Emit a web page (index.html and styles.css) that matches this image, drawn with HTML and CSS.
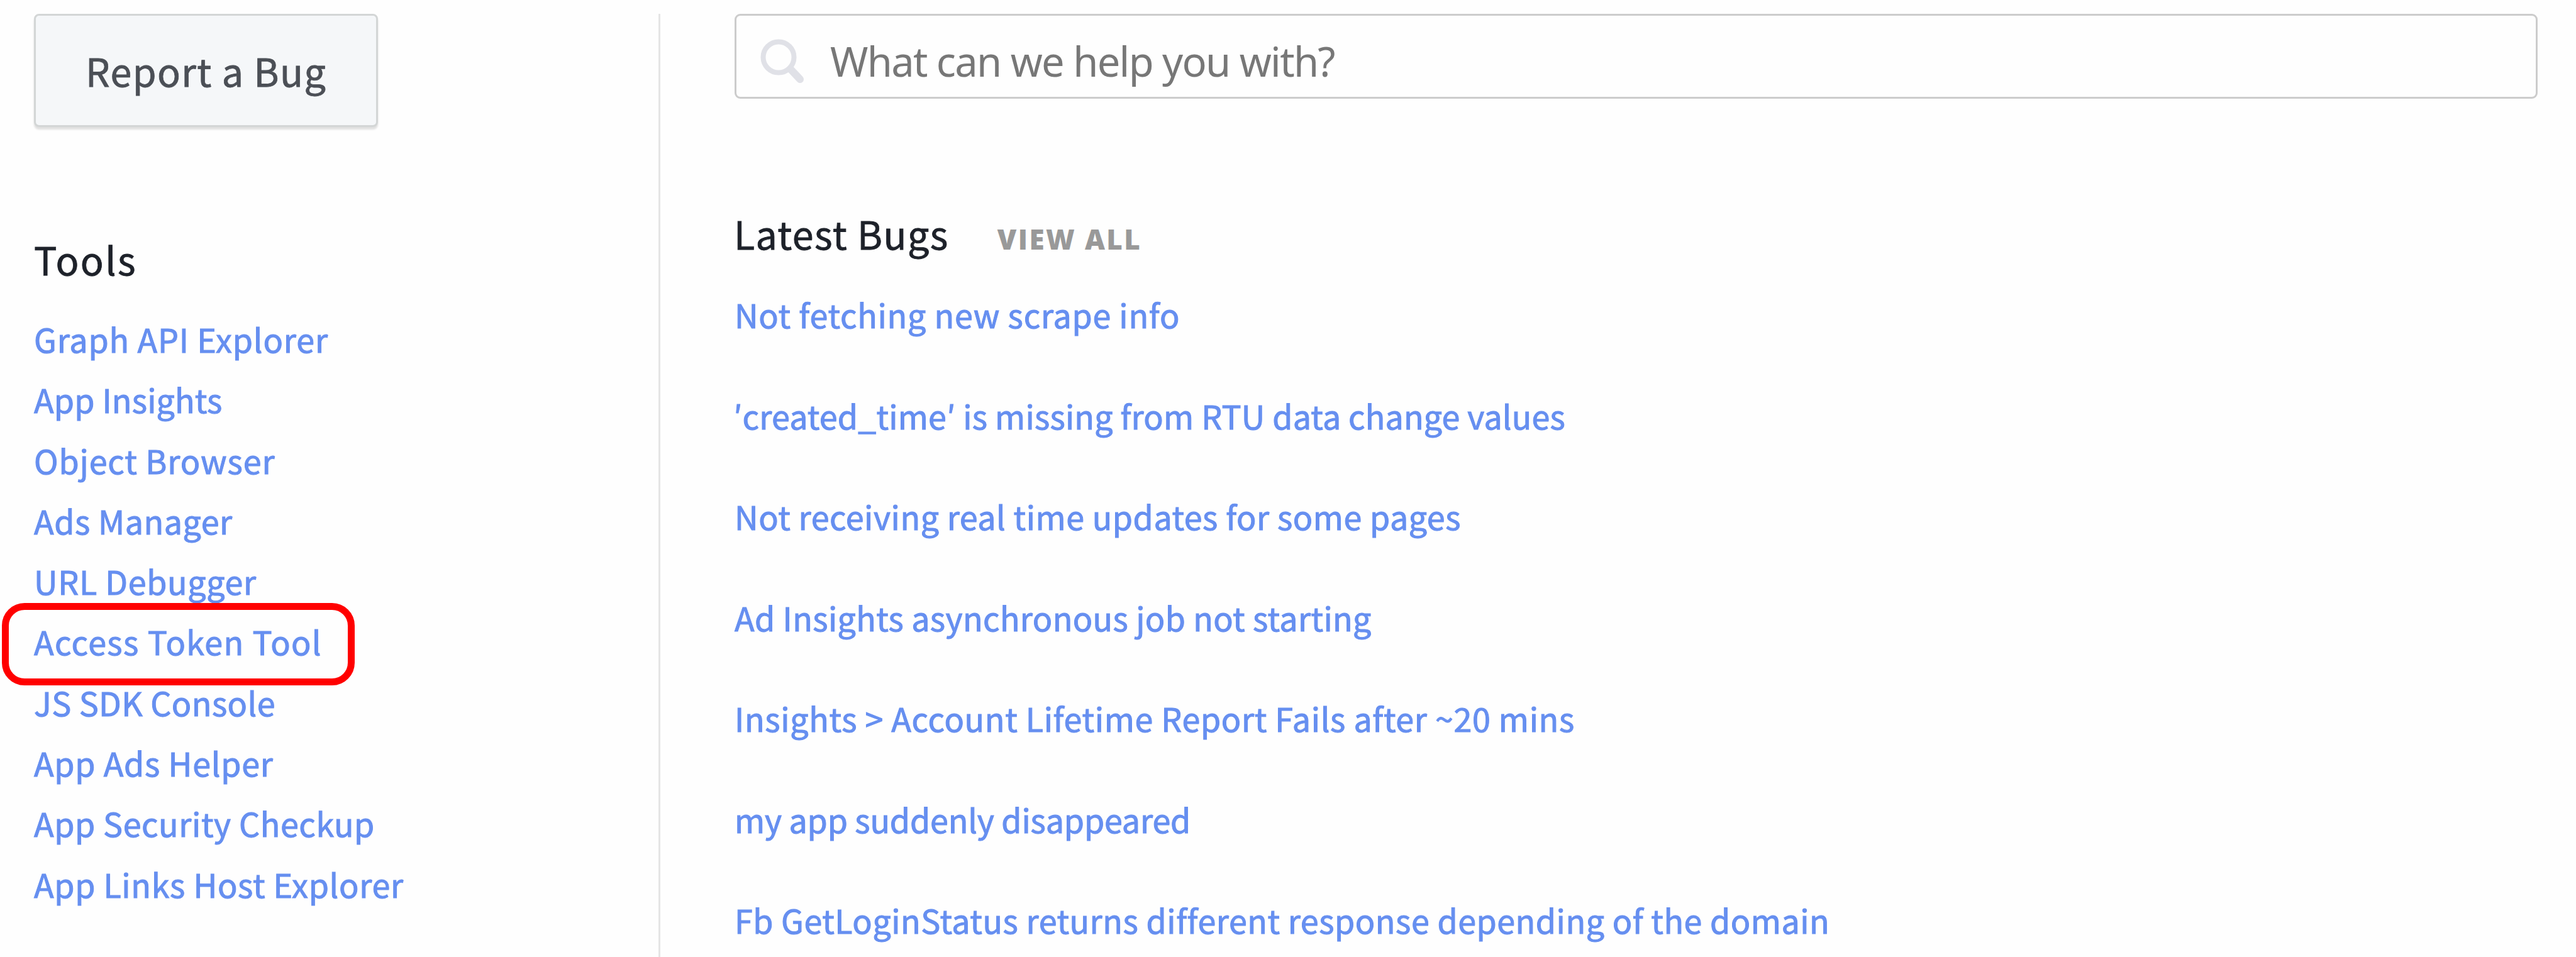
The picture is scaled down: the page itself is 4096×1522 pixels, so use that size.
FILE: index.html
```html
<!DOCTYPE html>
<html lang="en">
<head>
<meta charset="utf-8">
<title>Bugs</title>
<link rel="stylesheet" href="styles.css">
</head>
<body>
<div class="page">
  <aside class="sidebar">
    <button class="report" type="button">Report a Bug</button>
    <h2 class="tools-title">Tools</h2>
    <ul class="tools">
      <li><a>Graph API Explorer</a></li>
      <li><a>App Insights</a></li>
      <li><a>Object Browser</a></li>
      <li><a>Ads Manager</a></li>
      <li><a>URL Debugger</a></li>
      <li class="marked"><a>Access Token Tool</a></li>
      <li><a>JS SDK Console</a></li>
      <li><a>App Ads Helper</a></li>
      <li><a>App Security Checkup</a></li>
      <li><a>App Links Host Explorer</a></li>
    </ul>
  </aside>
  <main class="main">
    <div class="search">
      <svg class="search-icon" viewBox="0 0 76 76" width="76" height="76">
        <circle cx="32" cy="32" r="24.5" fill="none" stroke="#e0e1e7" stroke-width="8"/>
        <path d="M51 51 L66 67" fill="none" stroke="#e0e1e7" stroke-width="12" stroke-linecap="round"/>
      </svg>
      <span class="search-hint">What can we help you with?</span>
    </div>
    <div class="bugs-head">
      <h2 class="bugs-title">Latest Bugs</h2>
      <a class="view-all">VIEW ALL</a>
    </div>
    <ul class="bugs">
      <li><a>Not fetching new scrape info</a></li>
      <li><a>′created_time′ is missing from RTU data change values</a></li>
      <li><a>Not receiving real time updates for some pages</a></li>
      <li><a>Ad Insights asynchronous job not starting</a></li>
      <li><a>Insights &gt; Account Lifetime Report Fails after ~20 mins</a></li>
      <li><a>my app suddenly disappeared</a></li>
      <li><a>Fb GetLoginStatus returns different response depending of the domain</a></li>
    </ul>
  </main>
</div>
</body>
</html>
```
FILE: styles.css
```css
*, *::after { box-sizing: border-box; }

body {
  margin: 0;
  background: #fefefe;
  font-family: "Noto Sans CJK SC", "Open Sans", sans-serif;
  font-size: 52px;
  color: #1d2129;
}

h2, ul { margin: 0; padding: 0; font-weight: 400; }
ul { list-style: none; }
li { white-space: nowrap; }

.page {
  display: flex;
  height: 1522px;
  padding-top: 22px;
  overflow: hidden;
}

.sidebar {
  width: 1050px;
  padding-left: 54px;
  border-right: 3px solid #e5e5e5;
}

.report {
  display: block;
  width: 547px;
  height: 180px;
  margin: 0;
  padding: 0 0 0 79px;
  border: 3px solid #d3d6d6;
  border-radius: 8px;
  background: #f5f7f9;
  box-shadow: 0 4px 3px rgba(0, 0, 0, .12);
  color: #4b4f56;
  font: 400 61px/174px "Noto Sans CJK SC", "Open Sans", sans-serif;
  letter-spacing: 1.4px;
  text-align: left;
  -webkit-text-stroke: .8px #4b4f56;
}

.tools-title {
  margin-top: 170px;
  font-size: 61px;
  line-height: 80px;
  letter-spacing: 2.4px;
  -webkit-text-stroke: .8px #1d2129;
}

.tools, .bugs { color: #668ff0; -webkit-text-stroke: 1px #668ff0; }

.tools { margin-top: 39px; }
.tools li { position: relative; height: 96.3px; line-height: 96.3px; }

.tools li:nth-child(1) { letter-spacing: .85px; }
.tools li:nth-child(2) { letter-spacing: .16px; }
.tools li:nth-child(3) { letter-spacing: .88px; }
.tools li:nth-child(4) { letter-spacing: .53px; }
.tools li:nth-child(5) { letter-spacing: .7px; }
.tools li:nth-child(6) { letter-spacing: 1.35px; }
.tools li:nth-child(7) { letter-spacing: .4px; }
.tools li:nth-child(8) { letter-spacing: .75px; }
.tools li:nth-child(9) { letter-spacing: .58px; }
.tools li:nth-child(10) { letter-spacing: .67px; }

/* Red outline drawn over the highlighted tool */
.marked::after {
  content: "";
  position: absolute;
  left: -51px;
  top: -13px;
  width: 561px;
  height: 131px;
  border: 11px solid #f00;
  border-radius: 36px;
}

.main { flex: 1; padding: 0 61px 0 118px; }

.search {
  display: flex;
  height: 135px;
  border: 3px solid #ccc;
  border-radius: 9px;
  background: #fefefe;
}

.search-icon { flex: none; margin: 34px 0 0 35px; }

.search-hint {
  margin: 8px 0 0 38px;
  color: #777;
  font: 400 65px/129px "Noto Sans", sans-serif;
  letter-spacing: -1.72px;
  white-space: nowrap;
}

.bugs-head {
  display: flex;
  align-items: baseline;
  gap: 77px;
  margin: 174px 0 0 -1px;
}

.bugs-title {
  font-size: 61px;
  line-height: 80px;
  letter-spacing: 1.4px;
  -webkit-text-stroke: .8px #1d2129;
}

.view-all {
  color: #999;
  font: 800 44px/60px "Open Sans", sans-serif;
  letter-spacing: 2.4px;
}

.bugs {
  display: flex;
  flex-direction: column;
  gap: 80.5px;
  margin-top: 49px;
}

.bugs li { height: 80px; line-height: 80px; }
.bugs li:nth-child(1) { letter-spacing: .74px; }
.bugs li:nth-child(2) { letter-spacing: .16px; margin-left: -2px; }
.bugs li:nth-child(3) { letter-spacing: .53px; }
.bugs li:nth-child(4) { letter-spacing: .35px; }
.bugs li:nth-child(5) { letter-spacing: .66px; }
.bugs li:nth-child(6) { letter-spacing: -.15px; }
.bugs li:nth-child(7) { letter-spacing: .52px; }
```
